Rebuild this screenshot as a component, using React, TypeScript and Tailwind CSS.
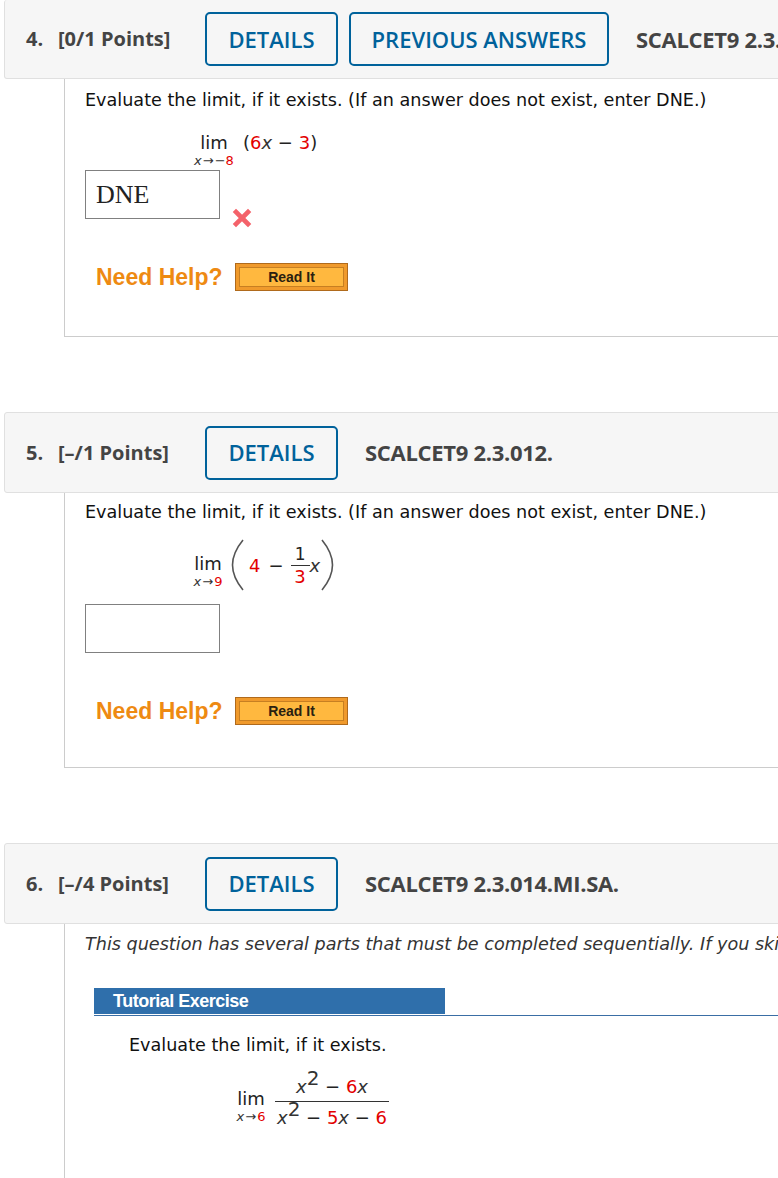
const BODY_FONT = "font-['DejaVu_Sans',sans-serif]";

function Red({ children }: { children: React.ReactNode }) {
  return <span className="text-[#e30000]">{children}</span>;
}

function X() {
  return <i className="italic text-[#333]">x</i>;
}

function Sup() {
  return <sup className="relative top-[-8px] text-[20px] leading-none align-baseline text-[#333]">2</sup>;
}

function Lim({ to, width }: { to: React.ReactNode; width: string }) {
  return (
    <div className={`flex flex-col items-center shrink-0 ${width}`}>
      <span className="text-[18px] leading-[22px] text-[#222]">lim</span>
      <span className="text-[13px] leading-[14px] whitespace-nowrap text-[#333]">
        <i className="italic">x</i>
        <span className="mx-[1px]">→</span>
        {to}
      </span>
    </div>
  );
}

function DetailsButton({ label, width }: { label: string; width: string }) {
  return (
    <div
      className={`flex h-[54px] shrink-0 items-center justify-center rounded-[5px] border-2 border-[#00629b] text-[22px] font-semibold text-[#00629b] ${width}`}
    >
      {label}
    </div>
  );
}

function Header({
  num,
  points,
  code,
  previous,
  className,
}: {
  num: string;
  points: string;
  code: string;
  previous?: boolean;
  className: string;
}) {
  return (
    <div
      className={`ml-[4px] flex w-[900px] items-center whitespace-nowrap rounded-[3px] border border-[#e0e0e0] bg-[#f6f6f6] pl-[21px] font-['Open_Sans',sans-serif] ${className}`}
    >
      <span className="w-[32px] text-[20px] font-bold text-[#444]">{num}</span>
      <span className="w-[147px] text-[20px] font-bold text-[#444]">{points}</span>
      <DetailsButton label="DETAILS" width="w-[133px]" />
      {previous && (
        <div className="ml-[11px]">
          <DetailsButton label="PREVIOUS ANSWERS" width="w-[260px]" />
        </div>
      )}
      <span className={`${previous ? "ml-[27px]" : "ml-[27px]"} text-[22px] font-bold text-[#444] tracking-[-0.3px]`}>{code}</span>
    </div>
  );
}

function AnswerBox({ value }: { value?: string }) {
  return (
    <div className="flex h-[49px] w-[135px] items-center border border-[#808080] bg-white pl-[10px] font-['Liberation_Serif',serif] text-[26px] leading-none text-[#222]">
      {value}
    </div>
  );
}

function NeedHelp({ className }: { className: string }) {
  return (
    <div className={`ml-[11px] flex items-center ${className}`}>
      <span className="w-[139px] font-['Liberation_Sans',sans-serif] text-[23px] font-bold leading-none text-[#ee8a12]">
        Need Help?
      </span>
      <div className="flex h-[28px] w-[113px] items-center justify-center border border-[#b06a1c] bg-[#f09a2c] p-[3px]">
        <div className="flex h-full w-full items-center justify-center border border-[#c77f22] bg-[#ffb83f] font-['Liberation_Sans',sans-serif] text-[14px] font-bold text-[#2a2010]">
          Read It
        </div>
      </div>
    </div>
  );
}

function BigParen({ flip }: { flip?: boolean }) {
  return (
    <svg width="14" height="52" viewBox="0 0 14 52" className={`shrink-0 ${flip ? "-scale-x-100" : ""}`}>
      <path d="M12 1 C3 12 1.5 20 1.5 26 C1.5 32 3 40 12 51" fill="none" stroke="#555" strokeWidth="1.6" />
    </svg>
  );
}

function WrongMark() {
  return (
    <svg width="20" height="20" viewBox="0 0 20 20" className="mb-[-9px] ml-[12px] shrink-0">
      <path d="M4 4 L16 16 M16 4 L4 16" stroke="#f4626a" strokeWidth="4.6" strokeLinecap="square" />
    </svg>
  );
}

export default function App() {
  return (
    <div className={`h-[1178px] w-[778px] overflow-hidden bg-white ${BODY_FONT}`}>
      {/* question 4 */}
      <Header
        num="4."
        points="[0/1 Points]"
        code="SCALCET9 2.3.011."
        previous
        className="h-[79px] border-t-0"
      />
      <div className="ml-[64px] h-[258px] border-b border-l border-[#ccc] pl-[20px]">
        <p className="pt-[9px] text-[17.6px] leading-[24px] text-[#111] whitespace-nowrap">
          Evaluate the limit, if it exists. (If an answer does not exist, enter DNE.)
        </p>
        <div className="ml-[105px] mt-[20px] flex h-[38px] items-start">
          <Lim width="w-[48px]" to={<>−<Red>8</Red></>} />
          <span className="ml-[5px] whitespace-nowrap text-[18px] leading-[22px] text-[#222]">
            (<Red>6</Red>
            <X /> − <Red>3</Red>)
          </span>
        </div>
        <div className="mt-[0px] flex items-end">
          <AnswerBox value="DNE" />
          <WrongMark />
        </div>
        <NeedHelp className="mt-[44px]" />
      </div>

      {/* question 5 */}
      <Header num="5." points="[–/1 Points]" code="SCALCET9 2.3.012." className="mt-[75px] h-[81px]" />
      <div className="ml-[64px] h-[275px] border-b border-l border-[#ccc] pl-[20px]">
        <p className="pt-[7px] text-[17.6px] leading-[24px] text-[#111] whitespace-nowrap">
          Evaluate the limit, if it exists. (If an answer does not exist, enter DNE.)
        </p>
        <div className="ml-[105px] mt-[13px] flex h-[56px] items-center text-[18px] text-[#222]">
          <div className="mt-[11px]">
            <Lim width="w-[36px]" to={<Red>9</Red>} />
          </div>
          <div className="ml-[5px] flex items-center">
            <BigParen />
            <span className="ml-[4px]"><Red>4</Red></span>
            <span className="ml-[8px]">−</span>
            <div className="ml-[7px] flex w-[19px] flex-col items-center leading-[22px]">
              <span className="border-b border-[#333] w-full text-center text-[17px]">1</span>
              <span className="text-[18px]"><Red>3</Red></span>
            </div>
            <X />
            <BigParen flip />
          </div>
        </div>
        <div className="mt-[11px]">
          <AnswerBox />
        </div>
        <NeedHelp className="mt-[44px]" />
      </div>

      {/* question 6 */}
      <Header num="6." points="[–/4 Points]" code="SCALCET9 2.3.014.MI.SA." className="mt-[75px] h-[81px]" />
      <div className="ml-[64px] h-[300px] border-l border-[#ccc] pl-[20px]">
        <p className="pt-[8px] text-[17.6px] leading-[24px] italic text-[#333] whitespace-nowrap">
          This question has several parts that must be completed sequentially. If you skip a part of the question, you will not receive any points for the skipped part.
        </p>
        <div className="ml-[9px] mt-[32px] w-[900px] border-b border-[#3a6ea5] pb-[1px]">
          <div className="flex h-[26px] w-[351px] items-center bg-[#2f6fab] pl-[19px] font-['Liberation_Sans',sans-serif] text-[18px] font-bold tracking-[-0.5px] text-white">
            Tutorial Exercise
          </div>
        </div>
        <p className="ml-[44px] mt-[17px] text-[17.6px] leading-[24px] text-[#111]">Evaluate the limit, if it exists.</p>
        <div className="ml-[148px] mt-[16px] flex items-center text-[18px] text-[#222]">
          <div className="mt-[4px]">
            <Lim width="w-[36px]" to={<Red>6</Red>} />
          </div>
          <div className="ml-[6px] flex w-[114px] flex-col items-center whitespace-nowrap">
            <div className="h-[29px] w-full border-b border-[#333] text-center leading-[28px]">
              <X />
              <Sup /> − <Red>6</Red>
              <X />
            </div>
            <div className="text-center leading-[32px]">
              <X />
              <Sup /> − <Red>5</Red>
              <X /> − <Red>6</Red>
            </div>
          </div>
        </div>
      </div>
    </div>
  );
}
